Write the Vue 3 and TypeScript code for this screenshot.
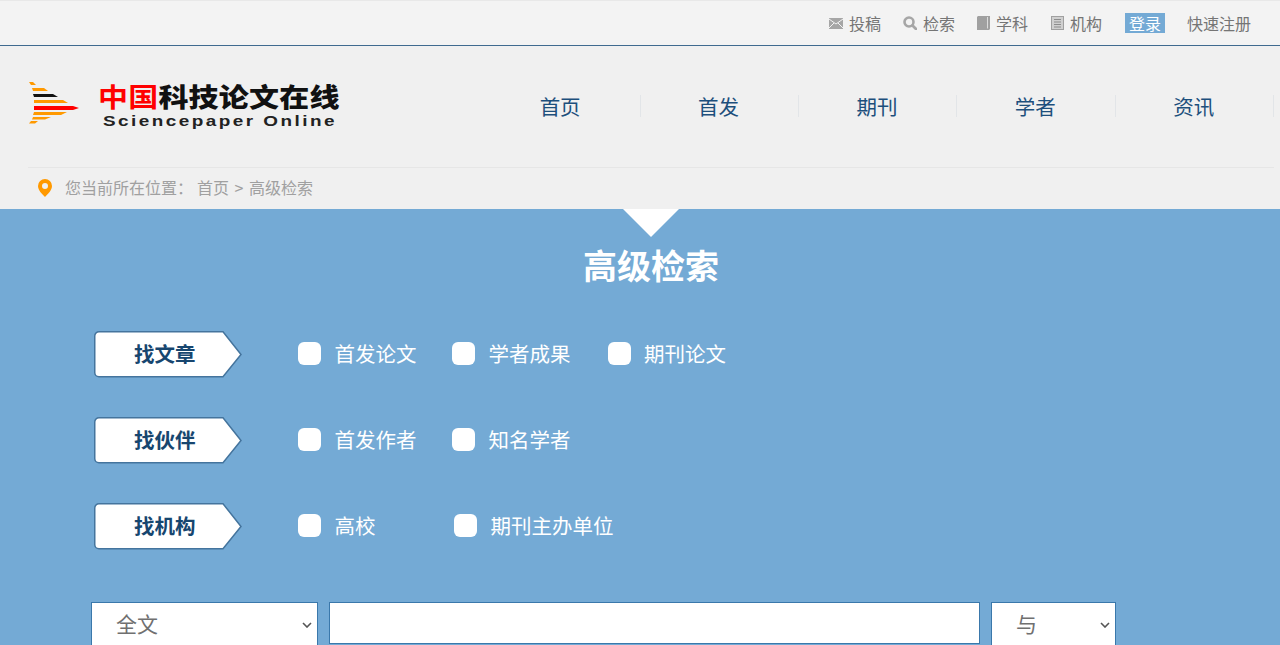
<script setup lang="ts">
const rows: { title: string; opts: string[]; wide?: boolean }[] = [
  { title: '找文章', opts: ['首发论文', '学者成果', '期刊论文'] },
  { title: '找伙伴', opts: ['首发作者', '知名学者'] },
  { title: '找机构', opts: ['高校', '期刊主办单位'], wide: true },
]
const navs = ['首页', '首发', '期刊', '学者', '资讯']
</script>

<template>
  <div class="page">
    <div class="topbar">
      <a class="tl t1">
        <svg width="14" height="11" viewBox="0 0 14 11"><rect width="14" height="11" fill="#a6a6a6"/><path d="M0 1l7 5 7-5M0 10l5-5M14 10L9 5" fill="none" stroke="#f3f3f3" stroke-width="1"/></svg>
        <span>投稿</span>
      </a>
      <a class="tl t2">
        <svg width="14" height="14" viewBox="0 0 14 14"><circle cx="6" cy="6" r="4.500" fill="none" stroke="#a6a6a6" stroke-width="2.600"/><path d="M9.500 9.500L13 13" stroke="#a6a6a6" stroke-width="2.800" stroke-linecap="round"/></svg>
        <span>检索</span>
      </a>
      <a class="tl">
        <svg width="13" height="14" viewBox="0 0 13 14"><path d="M0 1l1-1h12v13l-1 1H0z" fill="#a0a0a0"/><path d="M10.500 1v11.500" stroke="#dcdcdc"/></svg>
        <span>学科</span>
      </a>
      <a class="tl">
        <svg width="13" height="14" viewBox="0 0 13 14"><rect x=".5" y=".5" width="12" height="13" fill="#d0d0d0" stroke="#a0a0a0"/><path d="M3 3.500h7M3 6h7M3 8.500h7M3 11h7" stroke="#8c8c8c"/></svg>
        <span>机构</span>
      </a>
      <a class="login">登录</a>
      <a class="reg">快速注册</a>
    </div>

    <header class="head">
      <div class="mainrow">
        <div class="logo">
          <svg class="arrow" width="50" height="42" viewBox="0 0 50 42">
            <polygon points="0,0 4,0 7,3 2,3" fill="#f90"/>
            <polygon points="3,6 15,6 19,9 4,9" fill="#f90"/>
            <polygon points="4,12 24,12 29,15 5,15" fill="#111"/>
            <polygon points="5,18 34,18 39,21 5,21" fill="#f90"/>
            <polygon points="5,24 44,24 50,26 44,28 5,28" fill="#f00"/>
            <polygon points="5,30 38,30 32,33 4,33" fill="#f90"/>
            <polygon points="4,35 22,35 16,37.500 3,37.500" fill="#f90"/>
            <polygon points="2,39 9,39 6,41.500 0,41.500" fill="#f90"/>
          </svg>
          <div class="logotext">
            <div class="cn"><span class="red">中国</span>科技论文在线</div>
            <div class="en">Sciencepaper Online</div>
          </div>
        </div>
        <nav class="nav">
          <a v-for="n in navs" :key="n" class="navitem">{{ n }}</a>
        </nav>
      </div>
      <div class="crumb">
        <svg width="14" height="18" viewBox="0 0 14 18"><path fill-rule="evenodd" d="M7 0a7 7 0 0 1 7 7c0 4-4 8-7 11-3-3-7-7-7-11a7 7 0 0 1 7-7zm0 4a3 3 0 1 0 0 6 3 3 0 0 0 0-6z" fill="#f90"/></svg>
        <span class="c1">您当前所在位置：</span>
        <span class="c2">首页 &gt; 高级检索</span>
      </div>
    </header>

    <main class="blue">
      <div class="notch"></div>
      <h1 class="title">高级检索</h1>
      <div v-for="r in rows" :key="r.title" class="row">
        <div class="pill">
          <svg class="pillbg" width="148" height="47" viewBox="0 0 148 47">
            <path d="M5 .75H129L147 23.500L129 45.750H5A4.250 4.250 0 0 1 .75 41.500V5A4.250 4.250 0 0 1 5 .75z" fill="#fff" stroke="#44749d" stroke-width="1.500"/>
          </svg>
          <span class="pilltext">{{ r.title }}</span>
        </div>
        <div class="opts" :class="{ wide: r.wide }">
          <label v-for="o in r.opts" :key="o" class="opt">
            <i class="cb"></i><span class="lab">{{ o }}</span>
          </label>
        </div>
      </div>
      <div class="search">
        <div class="sel s1"><span>全文</span><svg width="10" height="6" viewBox="0 0 10 6"><path d="M1 1l4 4 4-4" fill="none" stroke="#555" stroke-width="1.600"/></svg></div>
        <input class="inp" type="text" />
        <div class="sel s2"><span>与</span><svg width="10" height="6" viewBox="0 0 10 6"><path d="M1 1l4 4 4-4" fill="none" stroke="#555" stroke-width="1.600"/></svg></div>
      </div>
    </main>
  </div>
</template>

<style>
html, body { margin: 0; overflow: hidden; background: #f0f0f0; }
</style>

<style scoped>
.page {
  width: 1280px;
  height: 645px;
  overflow: hidden;
  font-family: "Noto Sans CJK SC", "Liberation Sans", sans-serif;
  display: flex;
  flex-direction: column;
}
.topbar {
  box-sizing: border-box;
  background: #f3f3f3;
  border-top: 1px solid #e8e8e8;
  border-bottom: 1px solid #3f6a8f;
  height: 46px;
  display: flex;
  align-items: center;
  justify-content: flex-end;
  padding-right: 29px;
  font-size: 16px;
  color: #757575;
}
.tl { display: flex; align-items: center; gap: 6px; margin-right: 23px; line-height: 22px; }
.t1 { margin-right: 22px; }
.t2 { margin-right: 22px; }
.tl svg { flex: none; }
.login {
  background: #74aad5;
  color: #fff;
  width: 40px;
  height: 20px;
  line-height: 20px;
  text-align: center;
  margin-right: 22px;
}
.head { background: #f0f0f0; height: 163px; display: flex; flex-direction: column; }
.mainrow { height: 121px; display: flex; border-bottom: 1px solid #e6e6e6; margin: 0 6px 0 28px; }
.logo { width: 454.200px; flex: none; display: flex; padding: 36px 0 0 1px; box-sizing: border-box; align-items: flex-start; }
.arrow { flex: none; margin-right: 19px; }
.logotext { display: flex; flex-direction: column; }
.cn {
  font-size: 30px;
  line-height: 30px;
  font-weight: 900;
  color: #111;
  white-space: nowrap;
  letter-spacing: .2px;
  transform: scaleY(.88);
  transform-origin: left top;
}
.red { color: #f00; font-weight: 700; }
.en {
  font-family: "Liberation Sans", sans-serif;
  font-weight: 700;
  font-size: 14px;
  line-height: 16px;
  letter-spacing: 1.830px;
  color: #222;
  margin: 1px 0 0 5px;
  white-space: nowrap;
  transform: scaleX(1.35);
  transform-origin: left center;
}
.nav { display: flex; align-items: flex-start; padding-top: 49px; }
.navitem {
  width: 158.400px;
  height: 22px;
  line-height: 22px;
  box-sizing: border-box;
  text-align: center;
  padding-right: 1.500px;
  font-size: 20.500px;
  color: #1d4f7c;
  border-right: 1px solid #e2e5e8;
}
.crumb {
  flex: 1;
  display: flex;
  align-items: center;
  padding: 0 0 2px 38px;
  font-size: 16px;
  color: #a0a0a0;
}
.c1 { margin: 0 0 2px 13px; }
.c2 { margin: 0 0 2px 4px; word-spacing: 2px; }
.blue {
  flex: 1;
  position: relative;
  background: #74aad5;
  display: flex;
  flex-direction: column;
  min-height: 0;
}
.notch {
  position: absolute;
  left: 623px;
  top: 0;
  width: 56px;
  height: 28px;
  background: #fff;
  clip-path: polygon(0 0, 100% 0, 50% 100%);
}
.title {
  margin: 31px 0 0;
  height: 50px;
  line-height: 50px;
  text-align: center;
  font-size: 34px;
  font-weight: 700;
  color: #fff;
  padding-left: 22px;
}
.row {
  display: flex;
  align-items: center;
  height: 47px;
  margin: 39px 0 0 94px;
}
.title + .row { margin-top: 41px; }
.pill { position: relative; width: 148px; height: 47px; flex: none; }
.pillbg { display: block; }
.pilltext {
  position: absolute;
  left: 40px;
  top: 0;
  line-height: 45px;
  font-size: 20.500px;
  font-weight: 700;
  color: #17466f;
}
.opts { display: flex; margin: 0 0 2px 56px; color: #fff; font-size: 20.500px; }
.opt { display: flex; align-items: center; gap: 13.500px; width: 155.500px; height: 30px; white-space: nowrap; }
.opt:first-child { width: 154px; }
.lab { margin-bottom: 2px; }
.wide .opt:first-child { width: 156px; }
.cb {
  width: 23px;
  height: 23px;
  background: #fff;
  border-radius: 6px;
  flex: none;
}
.search {
  display: flex;
  align-items: flex-start;
  margin: 52px 0 0 91px;
  gap: 11px;
}
.sel {
  box-sizing: border-box;
  height: 60px;
  background: #fff;
  border: 1px solid #3a78ab;
  border-bottom: none;
  display: flex;
  align-items: flex-start;
  justify-content: space-between;
  font-size: 21px;
  color: #707070;
  line-height: 40px;
  flex: none;
}
.sel svg { margin: 19px 5px 0 0; flex: none; }
.s1 { width: 227px; padding-left: 24px; }
.s2 { width: 125px; padding-left: 24px; }
.inp {
  width: 651px;
  height: 42px;
  box-sizing: border-box;
  background: #fff;
  border: 1px solid #3a78ab;
  padding: 0;
  margin: 0;
  flex: none;
  outline: none;
}
</style>
